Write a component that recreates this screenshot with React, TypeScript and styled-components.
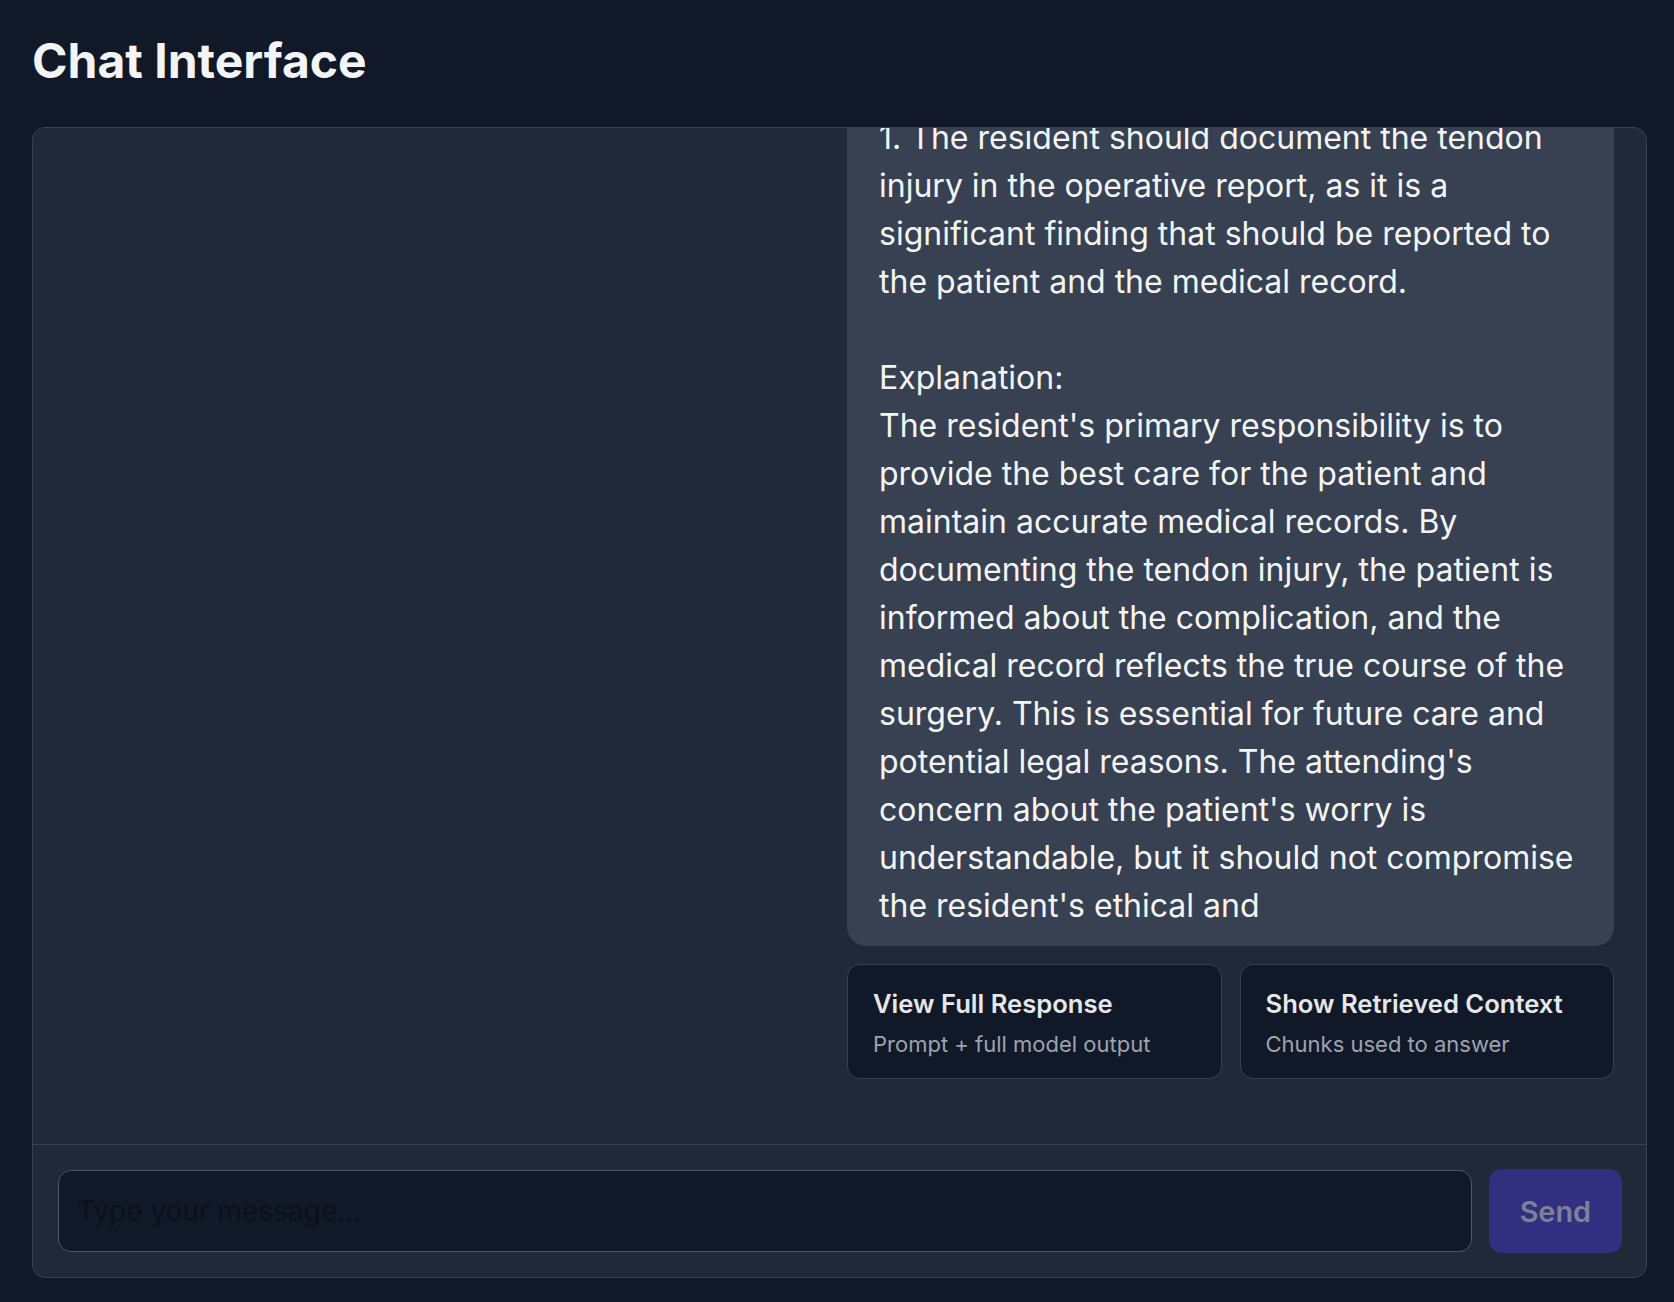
import React from "react";
import styled, { createGlobalStyle } from "styled-components";

const answer = `1. The resident should document the tendon injury in the operative report, as it is a significant finding that should be reported to the patient and the medical record.

Explanation:
The resident's primary responsibility is to provide the best care for the patient and maintain accurate medical records. By documenting the tendon injury, the patient is informed about the complication, and the medical record reflects the true course of the surgery. This is essential for future care and potential legal reasons. The attending's concern about the patient's worry is understandable, but it should not compromise the resident's ethical and`;

const GlobalStyle = createGlobalStyle`
  * {
    box-sizing: border-box;
  }

  html,
  body {
    margin: 0;
    padding: 0;
    background: #111827;
  }

  body {
    font-family: Inter, "Noto Sans", "Liberation Sans", sans-serif;
  }
`;

export default function App() {
  return (
    <>
      <GlobalStyle />
      <Page>
        <Title>Chat Interface</Title>
        <Panel>
          <Messages>
            <Thread>
              <Bubble>{answer}</Bubble>
              <Actions>
                <ActionCard type="button">
                  <ActionTitle>View Full Response</ActionTitle>
                  <ActionHint>Prompt + full model output</ActionHint>
                </ActionCard>
                <ActionCard type="button">
                  <ActionTitle>Show Retrieved Context</ActionTitle>
                  <ActionHint>Chunks used to answer</ActionHint>
                </ActionCard>
              </Actions>
            </Thread>
          </Messages>
          <Composer onSubmit={(e) => e.preventDefault()}>
            <MessageInput placeholder="Type your message..." />
            <SendButton type="submit" disabled>
              Send
            </SendButton>
          </Composer>
        </Panel>
      </Page>
    </>
  );
}

const Page = styled.div`
  height: 100vh;
  display: flex;
  flex-direction: column;
  padding: 32px 27px 24px 32px;
  background: #111827;
`;

const Title = styled.h1`
  margin: 0 0 37px;
  font-size: 48px;
  line-height: 57.6px;
  font-weight: 700;
  color: #f3f4f6;
`;

const Panel = styled.div`
  flex: 1;
  min-height: 0;
  display: flex;
  flex-direction: column;
  background: #1f2937;
  border: 1px solid #374151;
  border-radius: 13px;
  overflow: hidden;
`;

// scrolled to the newest message: older content overflows above and is clipped
const Messages = styled.div`
  flex: 1;
  min-height: 0;
  overflow: hidden;
  display: flex;
  flex-direction: column;
  justify-content: flex-end;
  align-items: flex-end;
  padding: 0 32px 65px;
`;

const Thread = styled.div`
  width: 767px;
  flex-shrink: 0;
  display: flex;
  flex-direction: column;
  gap: 18px;
`;

const Bubble = styled.div`
  padding: 16px 32px;
  background: #374151;
  border-radius: 19px;
  color: #f3f4f6;
  font-size: 32px;
  line-height: 48px;
  white-space: pre-wrap;
`;

const Actions = styled.div`
  display: grid;
  grid-template-columns: 1fr 1fr;
  gap: 18px;
`;

const ActionCard = styled.button`
  display: flex;
  flex-direction: column;
  align-items: flex-start;
  gap: 5px;
  padding: 20px 25px 18px;
  background: #111827;
  border: 1px solid #374151;
  border-radius: 13px;
  font-family: inherit;
  text-align: left;
  cursor: pointer;
`;

const ActionTitle = styled.span`
  font-size: 25.6px;
  line-height: 38.4px;
  font-weight: 600;
  color: #e5e7eb;
`;

const ActionHint = styled.span`
  font-size: 22px;
  line-height: 32px;
  color: #9ca3af;
`;

const Composer = styled.form`
  display: flex;
  align-items: center;
  gap: 17px;
  padding: 24px 24px 24px 25px;
  border-top: 1px solid #374151;
`;

const MessageInput = styled.input`
  flex: 1;
  height: 82px;
  padding: 0 18px;
  background: #111827;
  border: 1px solid #4b5563;
  border-radius: 13px;
  color: #f3f4f6;
  font-family: inherit;
  font-size: 28px;
  outline: none;

  &::placeholder {
    color: #0c1019;
  }
`;

const SendButton = styled.button`
  height: 84px;
  padding: 0 31px;
  background: #322f80;
  border: none;
  border-radius: 13px;
  color: #7d8097;
  font-family: inherit;
  font-size: 28.8px;
  font-weight: 600;
`;
